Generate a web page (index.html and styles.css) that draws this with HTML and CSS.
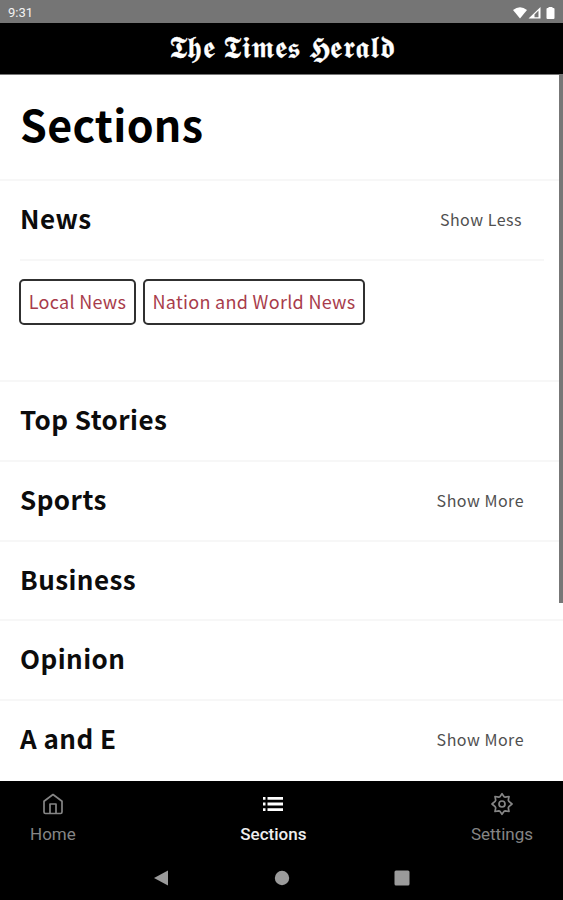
FILE: index.html
```html
<!DOCTYPE html>
<html lang="en">
<head>
<meta charset="utf-8">
<title>The Times Herald</title>
<link rel="stylesheet" href="styles.css">
</head>
<body>
<div class="status">
  <span class="time">9:31</span>
  <svg class="status-icons" width="44" height="14" viewBox="0 0 44 14">
    <path fill="#fff" d="M0 4Q7-1.500 14 4L7 12.500z"/>
    <path fill="#fff" fill-rule="evenodd" d="M15.500 12.500L27.500 1v11.500zM21.500 8.500v2.700h4v-6.700z"/>
    <path fill="#fff" d="M33.500 3q0-1 1-1h1V1h4v1h1q1 0 1 1v9q0 1-1 1h-6q-1 0-1-1z"/>
  </svg>
</div>
<header class="masthead"><span class="logo">𝕿𝖍𝖊 𝕿𝖎𝖒𝖊𝖘 𝕳𝖊𝖗𝖆𝖑𝖉</span></header>
<main class="content">
  <h1 class="title">Sections</h1>
  <section class="group">
    <div class="row open"><h2>News</h2><span class="toggle less">Show Less</span></div>
    <div class="chips"><span class="chip local">Local News</span><span class="chip nation">Nation and World News</span></div>
  </section>
  <div class="row"><h2>Top Stories</h2></div>
  <div class="row"><h2>Sports</h2><span class="toggle">Show More</span></div>
  <div class="row short"><h2>Business</h2></div>
  <div class="row"><h2>Opinion</h2></div>
  <div class="row last"><h2>A and E</h2><span class="toggle">Show More</span></div>
  <div class="scrollbar"></div>
</main>
<nav class="tabs">
  <div class="tab home">
    <svg width="24" height="24" viewBox="0 0 24 24" fill="none" stroke="#858585" stroke-width="1.700" stroke-linejoin="round"><path d="M3 9.200L12 2.500l9 6.700V20q0 1.500-1.500 1.500h-15Q3 21.500 3 20z"/><path d="M9 21.500V12h6v9.500"/></svg>
    <span>Home</span>
  </div>
  <div class="tab active">
    <svg width="24" height="24" viewBox="0 0 24 24" fill="#fff"><path d="M2 5h2.500v2.800H2zM6.500 5H22v2.800H6.500zM2 10.600h2.500v2.800H2zM6.500 10.600H22v2.800H6.500zM2 16.200h2.500V19H2zM6.500 16.200H22V19H6.500z"/></svg>
    <span>Sections</span>
  </div>
  <div class="tab settings">
    <svg width="24" height="24" viewBox="0 0 24 24" fill="none" stroke="#858585" stroke-width="1.700" stroke-linejoin="round"><circle cx="12" cy="12" r="3"/><path d="M9.900 4.700L12 1.700l2.100 3 1.100.4 3.800-.6-.7 3.600.6 1.300 3.100 2.600-3.100 2.600-.6 1.300.7 3.600-3.800-.6-1.100.4-2.100 3-2.100-3-1.100-.4-3.800.6.7-3.600-.6-1.300L2 12l3.100-2.600.6-1.300L5 4.500l3.800.6z"/></svg>
    <span>Settings</span>
  </div>
</nav>
<div class="system">
  <svg width="16" height="16" viewBox="0 0 16 16" fill="#9b9b9b"><path d="M1 8L15 .5v15z"/></svg>
  <svg width="16" height="16" viewBox="0 0 16 16" fill="#9b9b9b"><circle cx="8" cy="8" r="7.200"/></svg>
  <svg width="16" height="16" viewBox="0 0 16 16" fill="#9b9b9b"><rect x=".5" y=".5" width="15" height="15" rx="1.500"/></svg>
</div>
</body>
</html>
```
FILE: styles.css
```css
* { box-sizing: border-box; }
body { margin: 0; width: 563px; height: 900px; overflow: hidden; background: #fff; color: #0c0c0c; font-family: "Noto Sans CJK SC", "Noto Sans", sans-serif; display: flex; flex-direction: column; }
.status { height: 23px; background: #757575; display: flex; justify-content: space-between; align-items: center; padding: 2px 6px 0 8px; font-family: Roboto, sans-serif; }
.time { font-size: 13px; color: #f2f2f2; }
.status-icons { display: block; }
.masthead { height: 52px; background: #000; color: #fff; border-bottom: 1px solid #777; display: flex; justify-content: center; align-items: center; padding: 0 0 7px 1px; }
.logo { font-size: 30px; line-height: 30px; letter-spacing: .65px; white-space: nowrap; -webkit-text-stroke: .3px #fff; }
.content { position: relative; height: 706px; overflow: hidden; }
.title { margin: 0; height: 106px; padding-left: 20px; border-bottom: 2px solid #f7f7f7; font-size: 43px; line-height: 97px; letter-spacing: .3px; color: #000; }
.row { height: 80px; display: flex; align-items: center; justify-content: space-between; padding: 0 39px 4px 20px; border-bottom: 2px solid #f7f7f7; }
.row.short { height: 79px; }
.row.last { border-bottom-color: #fff; }
h2 { margin: 0; font-size: 26px; line-height: 40px; letter-spacing: .45px; }
.toggle { font-size: 16px; letter-spacing: .5px; color: #505050; padding-top: 2px; }
.group { height: 201px; border-bottom: 2px solid #f7f7f7; }
.row.open { margin: 0 19px 0 20px; padding: 0 22px 4px 0; }
.chips { display: flex; gap: 7px; padding: 18px 19px; }
.chip { height: 46px; border: 2px solid #303030; border-radius: 5px; display: flex; align-items: center; justify-content: center; color: #a83c4b; font-size: 18px; letter-spacing: .3px; white-space: nowrap; padding-bottom: 3px; }
.local { width: 117px; }
.nation { width: 222px; }
.scrollbar { position: absolute; right: 0; top: 0; width: 4px; height: 528px; background: #777; }
.tabs { height: 75px; background: #000; display: flex; justify-content: space-between; padding: 11px 30px 0; font-family: Roboto, sans-serif; }
.tab { display: flex; flex-direction: column; align-items: center; color: #858585; font-size: 17px; line-height: 20px; gap: 8px; }
.tab.active { color: #eee; font-weight: 500; }
.system { height: 44px; background: #000; display: flex; justify-content: center; gap: 104.500px; padding-top: 14px; }
```
